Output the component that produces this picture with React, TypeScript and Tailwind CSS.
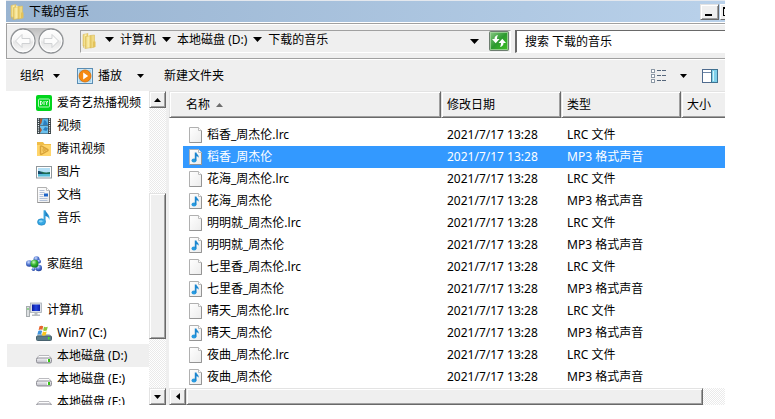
import { ReactNode, useState } from "react";
import clsx from "clsx";

interface MusicFile {
  name: string;
  kind: "lrc" | "mp3";
  date: string;
}

const songs = ["稻香", "花海", "明明就", "七里香", "晴天", "夜曲"];

const files: MusicFile[] = songs.flatMap((song): MusicFile[] => [
  { name: `${song}_周杰伦.lrc`, kind: "lrc", date: "2021/7/17 13:28" },
  { name: `${song}_周杰伦`, kind: "mp3", date: "2021/7/17 13:28" },
]);

const raised =
  "border border-t-[#e3e3e3] border-l-[#e3e3e3] border-b-[#696969] border-r-[#696969] bg-[#efefef] shadow-[inset_1px_1px_#fff,inset_-1px_-1px_#a0a0a0]";

const track =
  "bg-[repeating-conic-gradient(#fff_0_25%,#eaeaea_0_50%)] bg-[length:2px_2px]";

// shared gradients, referenced by id from the icons below
const Gradients = () => (
  <svg className="absolute h-0 w-0" aria-hidden="true">
    <defs>
      <linearGradient id="folder" x1="0" x2="1" y1="0" y2="0">
        <stop offset="0" stopColor="#e8cc66" />
        <stop offset="0.5" stopColor="#fbefb0" />
        <stop offset="1" stopColor="#e6c75c" />
      </linearGradient>
      <linearGradient id="page" x1="0" x2="1" y1="0" y2="1">
        <stop offset="0" stopColor="#ffffff" />
        <stop offset="1" stopColor="#ececec" />
      </linearGradient>
      <linearGradient id="note" x1="0" x2="1" y1="0" y2="0">
        <stop offset="0" stopColor="#45b3e8" />
        <stop offset="0.5" stopColor="#1c7fc2" />
        <stop offset="1" stopColor="#3fb0e6" />
      </linearGradient>
      <linearGradient id="orb" x1="0" x2="0" y1="0" y2="1">
        <stop offset="0" stopColor="#ffffff" />
        <stop offset="0.45" stopColor="#f6f6f6" />
        <stop offset="0.55" stopColor="#e6e6e6" />
        <stop offset="1" stopColor="#fbfbfb" />
      </linearGradient>
      <linearGradient id="green" x1="0" x2="1" y1="0" y2="1">
        <stop offset="0" stopColor="#8ecb8a" />
        <stop offset="0.5" stopColor="#2c9a2f" />
        <stop offset="1" stopColor="#3fc61f" />
      </linearGradient>
      <linearGradient id="drive" x1="0" x2="0" y1="0" y2="1">
        <stop offset="0" stopColor="#f7f7f9" />
        <stop offset="1" stopColor="#b9b9c2" />
      </linearGradient>
      <linearGradient id="screen" x1="0" x2="1" y1="0" y2="0">
        <stop offset="0" stopColor="#0a1a9c" />
        <stop offset="0.5" stopColor="#2345e0" />
        <stop offset="1" stopColor="#0c1fa8" />
      </linearGradient>
      <radialGradient id="blueBall" cx="0.4" cy="0.3" r="0.7">
        <stop offset="0" stopColor="#cfdcff" />
        <stop offset="0.5" stopColor="#5a7fd6" />
        <stop offset="1" stopColor="#1c3d9c" />
      </radialGradient>
      <radialGradient id="greenBall" cx="0.4" cy="0.3" r="0.7">
        <stop offset="0" stopColor="#c9f7bd" />
        <stop offset="0.5" stopColor="#35b52f" />
        <stop offset="1" stopColor="#117a1c" />
      </radialGradient>
    </defs>
  </svg>
);

const Icon = ({ children }: { children: ReactNode }) => (
  <svg className="h-4 w-4 shrink-0" viewBox="0 0 16 16" aria-hidden="true">
    {children}
  </svg>
);

const FolderIcon = () => (
  <Icon>
    <path d="M2 1.5 7 .5v13l-5-.5z" fill="url(#folder)" stroke="#dcc069" strokeWidth="0.6" />
    <path d="M9.500 2.500 13.500 2v12l-4 1z" fill="#f0d980" stroke="#d9bc60" strokeWidth="0.6" />
    <path d="M7 1.500 9.500 2v12H7z" fill="#fffbe2" />
    <path d="M4.500 3.500 10 2.500v12l-5.500 1z" fill="url(#folder)" stroke="#d8b953" strokeWidth="0.6" />
    <path d="M12 8.500h2.500V14l-2.500.500z" fill="#e3c25a" />
    <path d="M2.500 12.500v2l2 .8" fill="none" stroke="#d8b953" strokeWidth="0.6" />
  </Icon>
);

const PageShape = () => (
  <>
    <path d="M1.5.5h9l3 3v12h-12z" fill="url(#page)" stroke="#b0b0b0" />
    <path d="M1.500 15.500h12v-12" fill="none" stroke="#949494" />
    <path d="M10.500.5v3h3" fill="#fff" stroke="#bcbcbc" />
  </>
);

const FileIcon = ({ kind }: { kind: MusicFile["kind"] }) => (
  <Icon>
    <PageShape />
    {kind === "mp3" && (
      <>
        <ellipse cx="6" cy="11.500" rx="2.500" ry="2" fill="#2a9be0" />
        <path d="M6.800 3.500h1.600c.2 1.800 2.800 2.400 2.300 5.400-.3-1-1-1.500-2.200-1.700v4.300H6.800z" fill="#1b86cf" />
      </>
    )}
  </Icon>
);

const DiyIcon = () => (
  <Icon>
    <rect width="16" height="16" rx="2" fill="#00d51c" />
    <rect x="2.5" y="4" width="11" height="8" rx="1" fill="none" stroke="#b9f7c0" />
    <path d="M4.5 6v4M4.5 6.2c2.4 0 2.4 3.6 0 3.6M8 6v4M9.7 6l1 1.8v2.2M11.8 6l-1.1 1.8" fill="none" stroke="#fff" strokeWidth="0.9" />
  </Icon>
);

const FilmIcon = () => (
  <Icon>
    <rect x="1" width="14" height="16" fill="#3a4347" />
    <path d="M4 .500h8v7H4z" fill="#5bb4e4" />
    <path d="M4 8h8v7.500H4z" fill="#6cc2ee" />
    <path d="M4 .5h2.500L5.500 5 4 7zM4 9l2 3-2 3z" fill="#a9572f" />
    <path d="m8 2 2 1 2 4H7zM9 9l3 1-1.500 3L7 12z" fill="#2b7fc0" />
    <path d="M2.500 .500v15M13.500 .500v15" stroke="#e8eff2" strokeWidth="1.200" strokeDasharray="1.200 1" />
  </Icon>
);

const TencentIcon = () => (
  <Icon>
    <path d="M1 1h6l1.500 2H15v12H1z" fill="#f0bd48" />
    <path d="M1 4h14v11H1z" fill="#ffd56b" />
    <path d="M4.500 5.500v7c0 .8.700 1 1.300.700l5.700-3.300c.7-.4.7-1 0-1.400L5.800 5.200c-.6-.3-1.300-.2-1.300.3z" fill="#ffd56b" stroke="#d9a33a" strokeWidth="1.500" />
    <path d="M7 7.500v3l2.800-1.500z" fill="#ffd56b" stroke="#d9a33a" strokeWidth="1" />
  </Icon>
);

const PictureIcon = () => (
  <Icon>
    <rect x="0.500" y="2.500" width="15" height="11.500" fill="#fff" stroke="#8f979c" />
    <path d="M2 4h12v8.500H2z" fill="#b5e0f6" />
    <path d="M2 7.500c3-1 5 2 12 .500v2H2z" fill="#1d6b52" />
    <path d="M2 7c2 0 4 1.500 5 3H2z" fill="#17496b" />
    <path d="M2 10h12v2.500H2z" fill="#57bcd6" />
  </Icon>
);

const DocumentIcon = () => (
  <Icon>
    <PageShape />
    <path d="M3.500 3.500h5M3.500 5.500h5M3.500 7.500h4M3.500 9.500h4M3.500 11.500h8M3.500 13.500h8" stroke="#b3c1d8" />
    <path d="M8 6.500h4v3H8z" fill="#1d64c8" />
  </Icon>
);

const MusicIcon = () => (
  <Icon>
    <ellipse cx="5.500" cy="12" rx="4" ry="3.200" fill="#35a7e4" stroke="#1f7fbc" strokeWidth="0.6" />
    <path d="M7.500.3h2c.3 3 5.500 4.500 3.700 9.700-.3-2.500-1.700-3.700-3.700-4v6h-2z" fill="url(#note)" />
    <ellipse cx="4.800" cy="11.300" rx="2" ry="1.100" fill="#8ed6f7" />
  </Icon>
);

const HomeGroupIcon = () => (
  <Icon>
    <circle cx="10.500" cy="3.300" r="3" fill="url(#blueBall)" />
    <circle cx="3.300" cy="7.500" r="3.300" fill="url(#blueBall)" />
    <circle cx="13" cy="5.500" r="2" fill="url(#blueBall)" />
    <circle cx="12.700" cy="12" r="3.300" fill="url(#blueBall)" />
    <circle cx="8.500" cy="7.800" r="4" fill="url(#greenBall)" />
    <circle cx="7.500" cy="13.200" r="1.800" fill="url(#blueBall)" />
  </Icon>
);

const ComputerIcon = () => (
  <Icon>
    <rect x="0.500" y="4.500" width="3" height="10" fill="#dde0e2" stroke="#a7acaf" />
    <path d="M1 7h2" stroke="#4bc33c" />
    <rect x="4.500" y="1" width="11" height="9.500" fill="#dde1e8" stroke="#a6adb5" strokeWidth="0.800" />
    <path d="M6 2.500h8v6.500H6z" fill="url(#screen)" />
    <path d="M8.500 10.500h3v2h2.500V14H6v-1.500h2.500z" fill="#b6bbc0" />
  </Icon>
);

const DriveIcon = () => (
  <Icon>
    <path d="M3 7.500h10l2.500 3H.5z" fill="#fcfcfd" stroke="#a9a9af" strokeWidth="0.800" />
    <rect x="0.500" y="10" width="15" height="5" rx="1.500" fill="url(#drive)" stroke="#85858c" strokeWidth="0.900" />
    <path d="M11 11h1v3h-1z" fill="#fff" />
    <path d="M12 11h2v3h-2z" fill="#36c312" />
  </Icon>
);

const WindowsDriveIcon = () => (
  <Icon>
    <path d="M2.500 9h11l2 2.500H.5z" fill="#b7c6cc" />
    <rect x="0.500" y="11" width="15" height="4.500" rx="1" fill="#5b7b88" stroke="#47626e" />
    <path d="M12 12h1.500v2.500H12z" fill="#48e022" />
    <path d="M3.500 1.200C5 .4 6 .5 7.200 1.200L6.300 5c-1.300-.7-2.300-.6-3.700 0z" fill="#e8632b" />
    <path d="M8 1.700c1.300.7 2.500.6 3.800 0L10.800 5.500c-1.300.6-2.500.6-3.700 0z" fill="#8cc63e" />
    <path d="M2.300 5.900c1.400-.6 2.500-.6 3.800 0l-1 3.800c-1.300-.7-2.400-.6-3.800 0z" fill="#3d93de" />
    <path d="M6.900 6.400c1.300.7 2.500.6 3.800 0l-1 3.800c-1.400.6-2.500.6-3.800 0z" fill="#fbc51d" />
  </Icon>
);

const PlayIcon = () => (
  <Icon>
    <rect x="0.500" y="0.500" width="15" height="15" fill="#a4d3ee" stroke="#5b8db3" />
    <path d="M1.500 1.500h13v13h-13z" fill="none" stroke="#cfeafa" />
    <circle cx="8" cy="8" r="6" fill="#f68a12" stroke="#d76c05" strokeWidth="0.800" />
    <path d="M6.200 4.500v7l5-3.500z" fill="#fff" />
  </Icon>
);

const OrbIcon = ({ flip }: { flip?: boolean }) => (
  <svg className="h-[26px] w-[26px]" viewBox="0 0 26 26" aria-hidden="true">
    <circle cx="13" cy="13" r="12" fill="url(#orb)" stroke="#8f9295" strokeWidth="1.300" />
    <circle cx="13" cy="13" r="10.800" fill="none" stroke="#fff" />
    <path
      d={
        flip
          ? "M20.500 13 14 6.500v4H6v5h8v4z"
          : "M5.500 13 12 6.500v4h8v5h-8v4z"
      }
      fill="#fcfcfc"
      stroke="#cfd1d3"
      strokeLinejoin="round"
    />
  </svg>
);

const RefreshIcon = () => (
  <svg className="h-5 w-5" viewBox="0 0 20 20" aria-hidden="true">
    <rect x="0.500" y="0.500" width="19" height="19" rx="1" fill="url(#green)" stroke="#6d7d70" />
    <rect x="1.500" y="1.500" width="17" height="17" fill="none" stroke="#a6d8a0" strokeWidth="0.800" />
    <path d="M9 4C6.500 4.500 5.500 6 5.500 8H3l3.700 4.200L10.500 8H8c0-1.500.2-2.500 1-4z" fill="#fff" />
    <path d="M11 16c2.500-.5 3.500-2 3.500-4H17l-3.700-4.200L9.500 12H12c0 1.500-.2 2.500-1 4z" fill="#fff" />
  </svg>
);

const ViewIcon = () => (
  <Icon>
    {[1, 6, 11].map((y) => (
      <g key={y}>
        <rect x="0.500" y={y + 0.5} width="3" height="3" fill="#fff" stroke="#8d99a6" />
        <path d={`M6 ${y + 1.5}h4M11 ${y + 1.5}h4`} stroke="#56677c" />
      </g>
    ))}
  </Icon>
);

const PaneIcon = () => (
  <svg className="h-[14px] w-4" viewBox="0 0 16 14" aria-hidden="true">
    <rect x="0.500" y="0.500" width="15" height="13" fill="#fff" stroke="#4f6b8e" />
    <path d="M1 3.500h9" stroke="#6f88a8" />
    <rect x="9.500" y="0.500" width="6" height="13" fill="#7fd0ea" stroke="#3f7291" />
    <path d="M11.500 2v10" stroke="#d3f3fb" />
  </svg>
);

const Caret = ({ small }: { small?: boolean }) => (
  <svg
    className={small ? "h-1 w-[7px]" : "h-[5px] w-[9px]"}
    viewBox="0 0 9 5"
    preserveAspectRatio="none"
    aria-hidden="true"
  >
    <path d="M0 0h9L4.500 5z" />
  </svg>
);

const ScrollButton = ({ label, path }: { label: string; path: string }) => (
  <button
    aria-label={label}
    className={clsx("flex h-[17px] w-[17px] shrink-0 items-center justify-center", raised)}
  >
    <svg className="h-2 w-2" viewBox="0 0 8 8" aria-hidden="true">
      <path d={path} />
    </svg>
  </button>
);

interface NavItemProps {
  label: string;
  icon: ReactNode;
  root?: boolean;
  active?: boolean;
}

const NavItem = ({ label, icon, root, active }: NavItemProps) => (
  <a
    href="#"
    className={clsx(
      "ml-px flex h-[23px] shrink-0 items-center gap-[5px] whitespace-nowrap",
      root ? "pl-[19px]" : "pl-[29px]",
      active && "bg-[#efefef]"
    )}
  >
    {icon}
    {label}
  </a>
);

const TitleBar = () => (
  <header className="flex h-[22px] items-center border-t border-[#e4e8ee] bg-linear-to-r from-[#99b4d1] to-[#b9d1ea] pl-[3px]">
    <FolderIcon />
    <h1 className="grow pl-1">下载的音乐</h1>
    <button aria-label="最小化" className={clsx("flex h-4 w-[19px] items-end pb-[3px] pl-1", raised)}>
      <span className="h-0.5 w-[7px] bg-black" />
    </button>
    <button
      aria-label="最大化"
      className="ml-px flex h-4 w-[5px] items-center overflow-hidden border-t border-b border-l border-t-white border-b-[#696969] border-l-white bg-[#efefef] pl-[2px]"
    >
      <span className="h-[9px] w-[9px] shrink-0 border border-t-2 border-black" />
    </button>
  </header>
);

const AddressBar = () => (
  <nav className="mt-px flex h-9 items-center border border-r-0 border-[#a0a0a0] bg-[#efefef] pl-[3px] shadow-[inset_0_1px_#fff,0_1px_#fff]">
    <div className="flex gap-[2px] rounded-full bg-linear-to-b from-[#bdbdbd] to-[#efefef] to-70%">
      <button aria-label="后退">
        <OrbIcon />
      </button>
      <button aria-label="前进">
        <OrbIcon flip />
      </button>
    </div>
    <div className="ml-4 flex h-[23px] grow items-center border border-[#a0a0a0] border-r-white border-b-white">
      <FolderIcon />
      <div className="flex grow items-center gap-1.5 pl-2 pb-[3px]">
        <Caret />
        <a href="#">计算机</a>
        <Caret />
        <a href="#">本地磁盘 (D:)</a>
        <Caret />
        <a href="#">下载的音乐</a>
      </div>
      <button aria-label="历史记录" className="mr-2.5">
        <Caret />
      </button>
      <button aria-label="刷新" className="mr-px">
        <RefreshIcon />
      </button>
    </div>
    <input
      type="search"
      aria-label="搜索"
      placeholder="搜索 下载的音乐"
      className="ml-1 h-[23px] w-[210px] border-t border-b border-l-2 border-t-[#696969] border-b-white border-l-[#696969] bg-white pl-2 outline-none placeholder:text-black"
    />
  </nav>
);

const Toolbar = () => (
  <div className="flex h-8 items-center border-t border-white bg-[#efefef] pl-3.5">
    <button className="flex items-center gap-[9px]">
      组织
      <Caret small />
    </button>
    <button className="ml-[17px] flex items-center gap-[5px]">
      <PlayIcon />
      播放
    </button>
    <button aria-label="播放选项" className="ml-[15px]">
      <Caret small />
    </button>
    <button className="ml-5 grow text-left">新建文件夹</button>
    <button aria-label="更改视图">
      <ViewIcon />
    </button>
    <button aria-label="更多视图" className="ml-[13px]">
      <Caret small />
    </button>
    <button aria-label="预览窗格" className="mr-[7px] ml-[15px]">
      <PaneIcon />
    </button>
  </div>
);

const Sidebar = () => (
  <aside className="flex w-40 shrink-0">
    <nav className="flex h-[314px] grow flex-col overflow-hidden">
      <NavItem label="爱奇艺热播视频" icon={<DiyIcon />} />
      <NavItem label="视频" icon={<FilmIcon />} />
      <NavItem label="腾讯视频" icon={<TencentIcon />} />
      <NavItem label="图片" icon={<PictureIcon />} />
      <NavItem label="文档" icon={<DocumentIcon />} />
      <NavItem label="音乐" icon={<MusicIcon />} />
      <div className="h-[23px] shrink-0" />
      <NavItem label="家庭组" icon={<HomeGroupIcon />} root />
      <div className="h-[23px] shrink-0" />
      <NavItem label="计算机" icon={<ComputerIcon />} root />
      <NavItem label="Win7 (C:)" icon={<WindowsDriveIcon />} />
      <NavItem label="本地磁盘 (D:)" icon={<DriveIcon />} active />
      <NavItem label="本地磁盘 (E:)" icon={<DriveIcon />} />
      <NavItem label="本地磁盘 (F:)" icon={<DriveIcon />} />
    </nav>
    <div className={clsx("flex w-[17px] flex-col", track)}>
      <ScrollButton label="向上滚动" path="M0 6h7L3.500 2z" />
      <div className="h-[85px]" />
      <div className={clsx("h-[146px]", raised)} />
      <div className="grow" />
      <ScrollButton label="向下滚动" path="M0 2h7L3.500 6z" />
    </div>
  </aside>
);

interface HeaderCellProps {
  children: ReactNode;
  first?: boolean;
  last?: boolean;
}

const HeaderCell = ({ children, first, last }: HeaderCellProps) => (
  <th className="p-0 pb-1.5 font-normal">
    <div
      className={clsx(
        "flex h-[27px] items-center gap-1.5 whitespace-nowrap",
        first ? "pl-4" : "pl-[5px]",
        last
          ? "border-t border-b border-l border-t-[#e3e3e3] border-b-[#696969] border-l-[#e3e3e3] bg-[#efefef] shadow-[inset_1px_1px_#fff,inset_0_-1px_#a0a0a0]"
          : raised
      )}
    >
      {children}
    </div>
  </th>
);

const FileList = () => {
  const [selected, setSelected] = useState<string>("稻香_周杰伦");

  return (
    <main className="min-w-0 grow border-l-[3px] border-[#efefef]">
      <table className="w-full table-fixed border-collapse text-left">
        <colgroup>
          <col className="w-[272px]" />
          <col className="w-[120px]" />
          <col className="w-[120px]" />
          <col />
        </colgroup>
        <thead>
          <tr>
            <HeaderCell first>
              名称
              <svg className="h-1 w-[7px]" viewBox="0 0 7 4" aria-hidden="true">
                <path d="M0 4h7L3.500 0z" fill="#6d6d6d" />
              </svg>
            </HeaderCell>
            <HeaderCell>修改日期</HeaderCell>
            <HeaderCell>类型</HeaderCell>
            <HeaderCell last>大小</HeaderCell>
          </tr>
        </thead>
        <tbody>
          {files.map((file) => {
            const active = file.name === selected;
            const fill = active && "bg-[#3399ff] text-white";
            return (
              <tr key={file.name} onClick={() => setSelected(file.name)}>
                <td className="p-0 pl-3.5">
                  <div className={clsx("flex h-[22px] items-center gap-[3px] pl-[5px]", fill)}>
                    <FileIcon kind={file.kind} />
                    {file.name}
                  </div>
                </td>
                <td className={clsx("p-0 pl-1.5 whitespace-nowrap", fill)}>{file.date}</td>
                <td className={clsx("p-0 pl-1.5 whitespace-nowrap", fill)}>
                  {file.kind === "lrc" ? "LRC 文件" : "MP3 格式声音"}
                </td>
                <td className={clsx("p-0", fill)} />
              </tr>
            );
          })}
        </tbody>
      </table>
      <div className={clsx("flex h-[17px]", track)}>
        <ScrollButton label="向左滚动" path="M6 0v7L2 3.500z" />
        <div className={clsx("mr-[22px] grow", raised)} />
      </div>
    </main>
  );
};

const App = () => {
  return (
    <div className="bg-white pr-[50px] pl-1.5 font-['Noto_Sans','Noto_Sans_CJK_SC',sans-serif] text-xs leading-4 text-black">
      <Gradients />
      <TitleBar />
      <AddressBar />
      <Toolbar />
      <div className="flex">
        <Sidebar />
        <FileList />
      </div>
    </div>
  );
};

export default App;
